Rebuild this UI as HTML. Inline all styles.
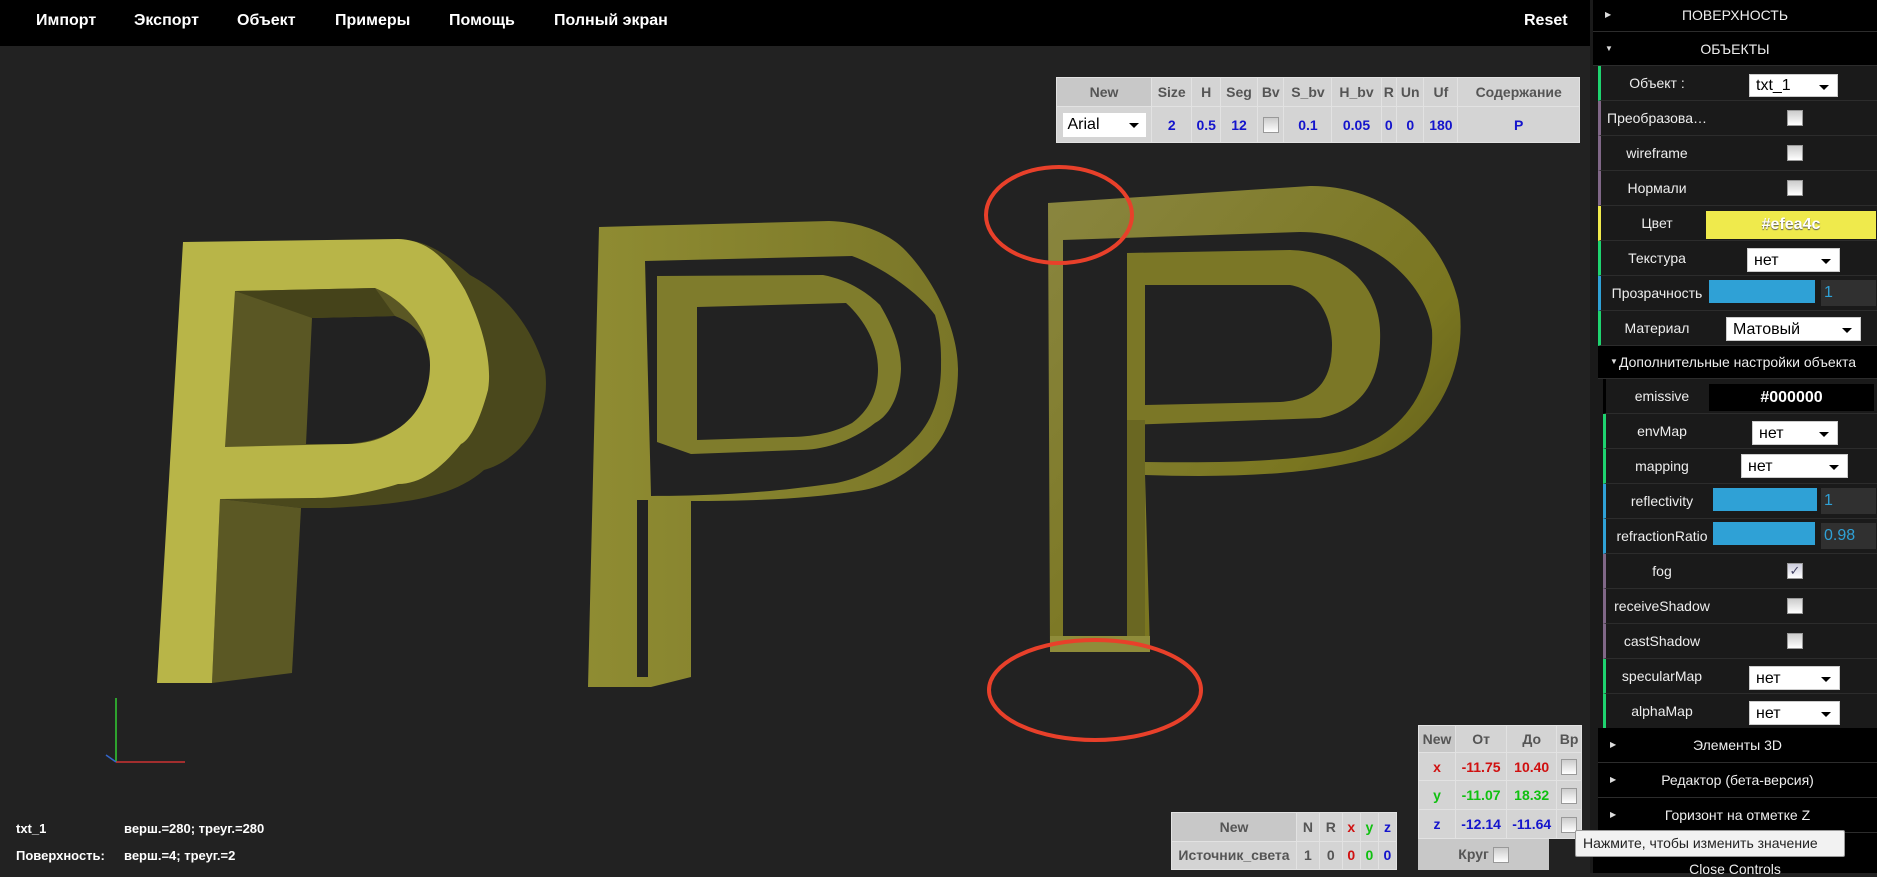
<!DOCTYPE html>
<html><head><meta charset="utf-8"><style>
*{margin:0;padding:0;box-sizing:border-box}
body{width:1877px;height:873px;background:#222;position:relative;overflow:hidden;font-family:"Liberation Sans","DejaVu Sans",sans-serif}
.a{position:absolute}
.menu{color:#fff;font-weight:bold;font-size:16px;top:12px;white-space:nowrap}
.row{position:absolute;left:1598px;width:279px;height:35px;background:#1a1a1a;border-bottom:1px solid #2c2c2c;border-left:3px solid #1ed36f}
.lbl{position:absolute;left:0;width:112px;text-align:center;top:9px;color:#eee;font-size:14px;white-space:nowrap;overflow:hidden}
.hdr{position:absolute;left:1593px;width:284px;height:35px;background:#000;border-bottom:1px solid #2c2c2c;color:#eee;font-size:14px;text-align:center;line-height:34px}
.tri{position:absolute;left:12px;top:0;font-size:8px;color:#ddd}
.sel{position:absolute;height:24px;background:#fff;border:1px solid #ccc;color:#000;font-size:16px;padding-left:6px;line-height:24px}
.sel:after{content:"";position:absolute;right:8px;top:10px;border-left:5px solid transparent;border-right:5px solid transparent;border-top:5px solid #000}
.cb{position:absolute;width:16px;height:16px;background:linear-gradient(#ccc,#fff);border:1px solid #999;left:186px;top:9px}
.slid{position:absolute;left:108px;top:4px;width:106px;height:23px;background:#2fa1d6}
.num{position:absolute;left:220px;top:4px;width:55px;height:26px;background:#303030;color:#2fa1d6;font-size:16px;line-height:26px;padding-left:3px}
table{border-collapse:collapse;position:absolute;font-size:14px;font-weight:bold;background:#d4d4d4}
td{border:1px solid #e2e2e2;text-align:center;padding:0;color:#555}
.bl{color:#1414cc}.rd{color:#d01010}.gr{color:#10c010}
.tcb{display:inline-block;width:16px;height:16px;border:1px solid #999;background:linear-gradient(#ccc,#fff);vertical-align:middle}
</style></head><body>
<div class="a" style="left:0;top:0;width:1593px;height:46px;background:#000"></div>
<div class="a menu" style="left:36px">Импорт</div>
<div class="a menu" style="left:134px">Экспорт</div>
<div class="a menu" style="left:237px">Объект</div>
<div class="a menu" style="left:335px">Примеры</div>
<div class="a menu" style="left:449px">Помощь</div>
<div class="a menu" style="left:554px">Полный экран</div>
<div class="a menu" style="left:1524px">Reset</div>

<svg class="a" style="left:0;top:0" width="1593" height="873">
<defs>
<linearGradient id="g3" x1="0" y1="0" x2="1" y2="1"><stop offset="0" stop-color="#8a8640"/><stop offset="0.6" stop-color="#7a7620"/><stop offset="1" stop-color="#4f4c16"/></linearGradient>
<linearGradient id="g2" x1="0" y1="0" x2="1" y2="0"><stop offset="0" stop-color="#8f8c32"/><stop offset="1" stop-color="#7a7628"/></linearGradient>
</defs>
<!-- Letter 1 -->
<path d="M398,239 C430,240 450,258 470,275 C500,291 530,320 545,370 C552,420 520,460 484,470 C450,500 398,504 330,508 L301,508 L220,499 Z" fill="#4a481c"/>
<path d="M220,499 L301,508 L292,673 L212,683 Z" fill="#5b5824"/>
<path d="M183,242 L398,239 C425,240 444,254 465,290 C485,330 492,366 488,390 C480,420 470,440 461,444 C440,470 420,484 398,484 C360,496 330,498 312,498 L220,499 L212,683 L157,683 Z" fill="#b8b548"/>
<path d="M235,291 L375,288 C405,300 427,330 427,349 C428,380 424,395 421,400 C405,430 380,444 347,444 L225,447 Z" fill="#5a5724"/>
<path d="M312,318 L395,316 C420,325 430,345 430,365 C430,400 410,440 347,444 L306,444 Z" fill="#222"/>
<path d="M235,291 L375,288 L395,316 L312,318 Z" fill="#45431a"/>
<!-- Letter 2 -->
<path d="M599,227 L829,221 C870,222 895,240 903,248 C935,280 958,330 958,369 C958,410 945,435 932,450 C905,478 880,488 858,491 C800,500 740,501 691,501 L691,677 L651,687 L588,687 Z" fill="url(#g2)"/>
<path d="M645,261 L852,256 C890,270 925,300 935,315 C942,340 941,355 941,369 C940,410 925,432 903,450 C880,470 850,482 829,484 C760,494 700,496 651,496 Z" fill="#222"/>
<path d="M657,276 L823,275 C850,280 870,295 880,305 C895,330 901,350 901,369 C900,395 890,415 875,423 C850,443 820,450 800,450 L691,454 L657,442 Z" fill="#7f7c2c"/>
<path d="M697,307 L846,303 C865,320 878,345 878,369 C878,395 867,412 852,423 C830,435 805,437 789,437 L697,440 Z" fill="#222"/>
<rect x="637" y="500" width="11" height="177" fill="#222"/>
<!-- Letter 3 -->
<path d="M1048,203 L1310,186 C1380,185 1440,230 1458,300 C1470,360 1440,430 1380,455 C1320,475 1230,478 1145,475 L1150,650 L1050,652 Z" fill="url(#g3)"/>
<path d="M1063,240 L1300,232 C1370,232 1425,280 1432,330 C1435,390 1400,440 1340,452 C1280,462 1220,463 1145,462 L1145,636 L1063,636 Z" fill="#222"/>
<path d="M1127,253 L1290,250 C1350,252 1378,290 1380,330 C1382,380 1362,410 1320,418 L1127,425 Z" fill="#7b7726"/>
<rect x="1127" y="420" width="18" height="230" fill="#6a6722"/>
<path d="M1145,285 L1290,285 C1320,290 1332,320 1332,345 C1332,385 1312,400 1280,402 L1145,405 Z" fill="#222"/>
<rect x="1050" y="636" width="100" height="16" fill="#8f8c3a"/>
<!-- red marks -->
<ellipse cx="1059" cy="215" rx="73" ry="48" fill="none" stroke="#e8402a" stroke-width="4"/>
<ellipse cx="1095" cy="690" rx="106" ry="50" fill="none" stroke="#e8402a" stroke-width="4"/>
<!-- axes -->
<line x1="116" y1="762" x2="116" y2="698" stroke="#3c3" stroke-width="1.5"/>
<line x1="116" y1="762" x2="185" y2="762" stroke="#c33" stroke-width="1.5"/>
<line x1="116" y1="762" x2="106" y2="755" stroke="#36c" stroke-width="1.5"/>
</svg>

<div class="a" style="left:16px;top:821px;color:#fff;font-size:13px;font-weight:bold">txt_1</div>
<div class="a" style="left:124px;top:821px;color:#fff;font-size:13px;font-weight:bold">верш.=280; треуг.=280</div>
<div class="a" style="left:16px;top:848px;color:#fff;font-size:13px;font-weight:bold">Поверхность:</div>
<div class="a" style="left:124px;top:848px;color:#fff;font-size:13px;font-weight:bold">верш.=4; треуг.=2</div>

<table style="left:1056px;top:77px;width:524px;height:66px">
<tr style="height:29px"><td style="width:95px;background:#c8c8c8">New</td><td>Size</td><td>H</td><td>Seg</td><td>Bv</td><td>S_bv</td><td>H_bv</td><td>R</td><td>Un</td><td>Uf</td><td>Содержание</td></tr>
<tr><td><div style="position:relative;width:83px;height:24px;margin:0 auto;background:#fff;text-align:left;font-weight:normal;color:#000;font-size:16px;line-height:24px;padding-left:5px">Arial<span style="position:absolute;right:7px;top:10px;border-left:5px solid transparent;border-right:5px solid transparent;border-top:5px solid #000"></span></div></td><td class="bl">2</td><td class="bl">0.5</td><td class="bl">12</td><td><span class="tcb"></span></td><td class="bl">0.1</td><td class="bl">0.05</td><td class="bl">0</td><td class="bl">0</td><td class="bl">180</td><td class="bl">P</td></tr>
</table>

<table style="left:1418px;top:725px;width:164px;height:114px">
<tr><td style="background:#c8c8c8;width:37px">New</td><td>От</td><td>До</td><td>Вр</td></tr>
<tr><td class="rd">x</td><td class="rd">-11.75</td><td class="rd">10.40</td><td><span class="tcb"></span></td></tr>
<tr><td class="gr">y</td><td class="gr">-11.07</td><td class="gr">18.32</td><td><span class="tcb"></span></td></tr>
<tr><td class="bl">z</td><td class="bl">-12.14</td><td class="bl">-11.64</td><td><span class="tcb"></span></td></tr>
</table>
<div class="a" style="left:1418px;top:839px;width:131px;height:31px;background:#c8c8c8;color:#555;font-weight:bold;font-size:14px;text-align:center;line-height:31px">Круг <span class="tcb"></span></div>

<table style="left:1171px;top:812px;width:226px;height:58px">
<tr><td style="background:#c8c8c8;width:125px">New</td><td>N</td><td>R</td><td class="rd">x</td><td class="gr">y</td><td class="bl">z</td></tr>
<tr><td>Источник_света</td><td>1</td><td>0</td><td class="rd">0</td><td class="gr">0</td><td class="bl">0</td></tr>
</table>

<!-- panel -->
<div class="a" style="left:1590px;top:0;width:287px;height:873px;background:#1a1a1a"></div>
<div class="hdr" style="top:0;height:32px;line-height:30px"><span class="tri">▶</span>ПОВЕРХНОСТЬ</div>
<div class="hdr" style="top:32px;height:34px"><span class="tri">▼</span>ОБЪЕКТЫ</div>
<div class="row" style="top:66px"><div class="lbl">Объект :</div><div class="sel" style="left:148px;top:8px;width:89px;height:23px;line-height:22px">txt_1</div></div>
<div class="row" style="top:101px;border-left-color:#806787"><div class="lbl">Преобразова…</div><div class="cb"></div></div>
<div class="row" style="top:136px;border-left-color:#806787"><div class="lbl">wireframe</div><div class="cb"></div></div>
<div class="row" style="top:171px;border-left-color:#806787"><div class="lbl">Нормали</div><div class="cb"></div></div>
<div class="row" style="top:206px;border-left-color:#efea4c"><div class="lbl">Цвет</div><div class="a" style="left:105px;top:5px;width:170px;height:28px;background:#efea4c;color:#fff;font-weight:bold;font-size:16px;text-align:center;line-height:28px;text-shadow:0 1px 1px #555">#efea4c</div></div>
<div class="row" style="top:241px"><div class="lbl">Текстура</div><div class="sel" style="left:146px;top:7px;width:93px">нет</div></div>
<div class="row" style="top:276px;border-left-color:#2fa1d6"><div class="lbl">Прозрачность</div><div class="slid"></div><div class="num">1</div></div>
<div class="row" style="top:311px"><div class="lbl">Материал</div><div class="sel" style="left:125px;top:6px;width:135px">Матовый</div></div>
<div class="hdr" style="left:1598px;width:279px;top:346px;height:33px;line-height:32px"><span class="tri">▼</span>Дополнительные настройки объекта</div>
<div class="row" style="top:379px;left:1603px;width:274px;border-left-color:#000"><div class="lbl">emissive</div><div class="a" style="left:103px;top:5px;width:165px;height:27px;background:#000;color:#fff;font-weight:bold;font-size:16px;text-align:center;line-height:27px">#000000</div></div>
<div class="row" style="top:414px;left:1603px;width:274px"><div class="lbl">envMap</div><div class="sel" style="left:146px;top:7px;width:86px">нет</div></div>
<div class="row" style="top:449px;left:1603px;width:274px"><div class="lbl">mapping</div><div class="sel" style="left:135px;top:5px;width:107px">нет</div></div>
<div class="row" style="top:484px;left:1603px;width:274px;border-left-color:#2fa1d6"><div class="lbl">reflectivity</div><div class="slid" style="left:107px;width:104px"></div><div class="num" style="left:215px">1</div></div>
<div class="row" style="top:519px;left:1603px;width:274px;border-left-color:#2fa1d6"><div class="lbl" style="overflow:visible">refractionRatio</div><div class="slid" style="left:107px;width:102px;top:3px"></div><div class="num" style="left:215px">0.98</div></div>
<div class="row" style="top:554px;left:1603px;width:274px;border-left-color:#806787"><div class="lbl">fog</div><div class="cb" style="left:181px;background:linear-gradient(#ccd,#fff);color:#446;font-size:13px;line-height:14px;text-align:center">✓</div></div>
<div class="row" style="top:589px;left:1603px;width:274px;border-left-color:#806787"><div class="lbl">receiveShadow</div><div class="cb" style="left:181px"></div></div>
<div class="row" style="top:624px;left:1603px;width:274px;border-left-color:#806787"><div class="lbl">castShadow</div><div class="cb" style="left:181px"></div></div>
<div class="row" style="top:659px;left:1603px;width:274px"><div class="lbl">specularMap</div><div class="sel" style="left:143px;top:7px;width:91px">нет</div></div>
<div class="row" style="top:694px;left:1603px;width:274px"><div class="lbl">alphaMap</div><div class="sel" style="left:143px;top:7px;width:91px">нет</div></div>
<div class="hdr" style="left:1598px;width:279px;top:728px"><span class="tri">▶</span>Элементы 3D</div>
<div class="hdr" style="left:1598px;width:279px;top:763px"><span class="tri">▶</span>Редактор (бета-версия)</div>
<div class="hdr" style="left:1598px;width:279px;top:798px"><span class="tri">▶</span>Горизонт на отметке Z</div>
<div class="a" style="left:1593px;top:833px;width:284px;height:40px;background:#000"></div>
<div class="a" style="left:1593px;top:861px;width:284px;text-align:center;color:#eee;font-size:14px">Close Controls</div>
<div class="a" style="left:1575px;top:830px;width:270px;height:27px;background:#f2f2f2;border:1px solid #999;border-radius:2px;color:#222;font-size:14px;line-height:25px;padding-left:7px;white-space:nowrap">Нажмите, чтобы изменить значение</div>
</body></html>
